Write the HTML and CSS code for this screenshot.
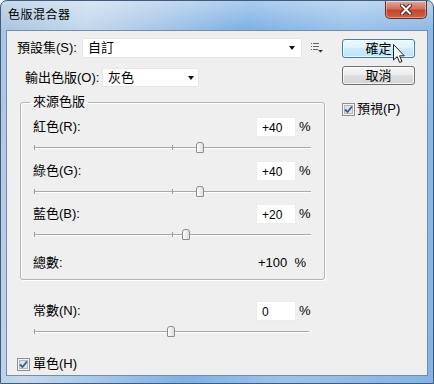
FILE: index.html
```html
<!DOCTYPE html>
<html lang="zh-Hant">

<head>
    <meta charset="UTF-8">
    <meta name="viewport" content="width=device-width, initial-scale=1.0">
    <title>色版混合器</title>
    <link rel="stylesheet" href="styles.css">
</head>

<body>
    <div class="window">
        <div class="titlebar">
            <span class="title">色版混合器</span>
            <div class="close-btn">
                <svg width="12" height="11" viewBox="0 0 12 11">
                    <path d="M2 1.5 L10 9.5 M10 1.5 L2 9.5" stroke="#4a2420" stroke-width="4" stroke-linecap="square"/>
                    <path d="M2 1.5 L10 9.5 M10 1.5 L2 9.5" stroke="#fff" stroke-width="2" stroke-linecap="square"/>
                </svg>
            </div>
        </div>

        <div class="client">
            <div class="main">
                <div class="preset-row">
                    <span class="preset-label">預設集(S):</span>
                    <div class="select preset-select"><span>自訂</span><span class="arrow"></span></div>
                    <!-- preset menu icon -->
                    <svg class="list-icon" width="12" height="10" viewBox="0 0 12 10">
                        <rect x="0" y="0" width="1" height="1" fill="#666"/>
                        <rect x="2" y="0" width="6" height="1" fill="#666"/>
                        <rect x="0" y="3" width="1" height="1" fill="#666"/>
                        <rect x="2" y="3" width="6" height="1" fill="#666"/>
                        <rect x="0" y="6" width="1" height="1" fill="#666"/>
                        <rect x="2" y="6" width="5" height="1" fill="#666"/>
                        <path d="M7 7 L12 7 L9.5 9.5 Z" fill="#333"/>
                    </svg>
                </div>

                <div class="output-row">
                    <span class="output-label">輸出色版(O):</span>
                    <div class="select output-select"><span>灰色</span><span class="arrow"></span></div>
                </div>

                <fieldset class="group">
                    <legend>來源色版</legend>

                    <div class="channel">
                        <div class="value-row">
                            <span class="label">紅色(R):</span>
                            <span class="num">+40</span>
                            <span class="pct">%</span>
                        </div>
                        <div class="slider">
                            <span class="tick start"></span>
                            <span class="tick mid"></span>
                            <span class="thumb" style="left: 60%"></span>
                        </div>
                    </div>

                    <div class="channel">
                        <div class="value-row">
                            <span class="label">綠色(G):</span>
                            <span class="num">+40</span>
                            <span class="pct">%</span>
                        </div>
                        <div class="slider">
                            <span class="tick start"></span>
                            <span class="tick mid"></span>
                            <span class="thumb" style="left: 60%"></span>
                        </div>
                    </div>

                    <div class="channel">
                        <div class="value-row">
                            <span class="label">藍色(B):</span>
                            <span class="num">+20</span>
                            <span class="pct">%</span>
                        </div>
                        <div class="slider">
                            <span class="tick start"></span>
                            <span class="tick mid"></span>
                            <span class="thumb" style="left: 55%"></span>
                        </div>
                    </div>

                    <div class="total-row">
                        <span class="label">總數:</span>
                        <span class="total">+100&nbsp;&nbsp;%</span>
                    </div>
                </fieldset>

                <div class="channel constant">
                    <div class="value-row">
                        <span class="label">常數(N):</span>
                        <span class="num">0</span>
                        <span class="pct">%</span>
                    </div>
                    <div class="slider">
                        <span class="tick start"></span>
                        <span class="thumb" style="left: 50%"></span>
                    </div>
                </div>

                <label class="check mono">
                    <svg class="box" width="13" height="13" viewBox="0 0 13 13">
                        <rect x="0.5" y="0.5" width="12" height="12" fill="#f4f4f4" stroke="#8f8f8f"/>
                        <rect x="2.5" y="2.5" width="8" height="8" fill="#dfe4ea" stroke="#b4b9c0"/>
                        <path d="M3 6.5 L5.5 9 L10 3.5" fill="none" stroke="#3d5a96" stroke-width="1.8"/>
                    </svg>
                    <span>單色(H)</span>
                </label>
            </div>

            <div class="side">
                <button class="btn default">確定</button>
                <button class="btn">取消</button>
                <label class="check">
                    <svg class="box" width="13" height="13" viewBox="0 0 13 13">
                        <rect x="0.5" y="0.5" width="12" height="12" fill="#f4f4f4" stroke="#8f8f8f"/>
                        <rect x="2.5" y="2.5" width="8" height="8" fill="#dfe4ea" stroke="#b4b9c0"/>
                        <path d="M3 6.5 L5.5 9 L10 3.5" fill="none" stroke="#3d5a96" stroke-width="1.8"/>
                    </svg>
                    <span>預視(P)</span>
                </label>
            </div>

            <!-- mouse pointer over the OK button -->
            <svg class="cursor" width="12" height="20" viewBox="0 0 12 20">
                <path d="M0.5 0.5 L0.5 16 L4.2 12.6 L6.6 18.5 L9 17.5 L6.6 11.8 L11.3 11.8 Z" fill="#fff" stroke="#222" stroke-width="1"/>
            </svg>
        </div>
    </div>
</body>

</html>
```

FILE: styles.css
```css
* {
    box-sizing: border-box;
}

html, body {
    margin: 0;
    padding: 0;
    background-color: #fff;
}

body {
    font-family: "Liberation Sans", "Noto Sans CJK TC", sans-serif;
    font-size: 13px;
    color: #000;
}

.window {
    width: 434px;
    height: 384px;
    display: flex;
    flex-direction: column;
    padding: 0 6px 8px;
    border: 1px solid #3d5c80;
    border-radius: 7px 7px 0 0;
    background:
        linear-gradient(to bottom, rgba(255, 255, 255, 0.35), rgba(255, 255, 255, 0) 28px),
        linear-gradient(100deg, #a9c3df 0%, #c4d8ec 18%, #a9c7e8 32%, #7fb1e4 50%, #9cc2ea 70%, #86b3e3 100%);
}

.titlebar {
    height: 30px;
    display: flex;
    justify-content: space-between;
    align-items: flex-start;
}

.title {
    margin: 6px 0 0 1px;
    font-size: 12px;
    line-height: 16px;
    letter-spacing: 0.5px;
}

.close-btn {
    width: 42px;
    height: 18px;
    display: flex;
    align-items: center;
    justify-content: center;
    border: 1px solid #6b2d22;
    border-top: none;
    border-radius: 0 0 5px 5px;
    background: linear-gradient(to bottom, #eab0a2 0%, #d9796300 0%, #e09a8a 10%, #d46f5a 45%, #c2442c 55%, #cd6446 100%);
    box-shadow: inset 0 0 0 1px rgba(255, 255, 255, 0.35);
}

.client {
    position: relative;
    height: 344px;
    display: flex;
    background-color: #efefef;
    box-shadow: 0 0 0 1px #6f8db0;
}

.main {
    width: 328px;
    padding-top: 7px;
}

.preset-row, .output-row {
    display: flex;
    align-items: center;
    line-height: 16px;
}

.preset-row {
    height: 20px;
}

.preset-label {
    width: 65px;
    margin-left: 10px;
}

.select {
    display: flex;
    align-items: center;
    justify-content: space-between;
    height: 100%;
    background-color: #fff;
    border: 1px solid #e6e6e6;
}

.preset-select {
    width: 220px;
    padding: 0 6px 0 5px;
}

.output-row {
    height: 19px;
    margin-top: 10px;
}

.output-label {
    width: 77px;
    margin-left: 18px;
}

.output-select {
    width: 97px;
    padding: 0 4px 0 5px;
}

.arrow {
    width: 0;
    height: 0;
    border-left: 3.5px solid transparent;
    border-right: 3.5px solid transparent;
    border-top: 4px solid #111;
}

.list-icon {
    margin-left: 9px;
}

/* source channels group */
.group {
    width: 303px;
    margin: 7px 0 0 13px;
    padding: 7px 13px 0 12px;
    border: 1px solid #b4b4b4;
    border-radius: 3px;
    box-shadow: inset 1px 1px 0 #fff, 1px 1px 0 #fff;
}

.group legend {
    margin-left: -3px;
    padding: 0 3px;
    line-height: 16px;
}

.channel {
    height: 43px;
}

.channel + .channel {
    margin-top: 0.5px;
}

.value-row {
    display: grid;
    grid-template-columns: 223px 40px auto;
    align-items: center;
    height: 20px;
    line-height: 16px;
}

.num {
    height: 20px;
    padding-left: 5px;
    font-size: 12px;
    line-height: 20px;
    background-color: #fff;
    border: 1px solid #ececec;
}

.pct {
    padding-left: 3px;
    white-space: nowrap;
}

.slider {
    position: relative;
    height: 23px;
}

.slider::before {
    content: "";
    position: absolute;
    left: 1px;
    right: 0;
    top: 10px;
    height: 1px;
    background-color: #a8a8a8;
    border-bottom: 1px solid #fff;
    box-sizing: content-box;
}

.tick {
    position: absolute;
    top: 8px;
    width: 1px;
    height: 5px;
    background-color: #9a9a9a;
}

.tick.start {
    left: 1px;
}

.tick.mid {
    left: 50%;
}

.thumb {
    position: absolute;
    top: 5px;
    width: 8px;
    height: 11px;
    margin-left: -4px;
    border: 1px solid #8c8c8c;
    border-radius: 3px 3px 1px 1px;
    background: linear-gradient(to right, #fdfdfd, #dedede);
}

.total-row {
    display: grid;
    grid-template-columns: 225px auto;
    align-items: center;
    height: 32px;
    line-height: 16px;
}

.constant {
    width: 276px;
    margin: 21px 0 0 26px;
}

.check {
    display: flex;
    align-items: center;
    gap: 3px;
    line-height: 16px;
}

.mono {
    margin: 12px 0 0 10px;
}

/* buttons column */
.side {
    display: flex;
    flex-direction: column;
    align-items: flex-start;
    margin-left: 7px;
    padding-top: 8px;
}

.btn {
    width: 73px;
    height: 19px;
    padding: 0;
    font-family: inherit;
    font-size: 13px;
    line-height: 16px;
    color: #000;
    border: 1px solid #707070;
    border-radius: 3px;
    background: linear-gradient(to bottom, #f6f6f6 0%, #ececec 45%, #dfdfdf 50%, #d3d3d3 100%);
    box-shadow: inset 0 0 0 1px rgba(255, 255, 255, 0.7);
}

.btn + .btn {
    margin-top: 8px;
}

.btn.default {
    border-color: #3c7fb1;
    background: linear-gradient(to bottom, #eef8fe 0%, #dff2fc 45%, #cdeafa 50%, #bfe3f7 100%);
}

.side .check {
    margin-top: 16px;
    gap: 2px;
}

.cursor {
    position: absolute;
    left: 386px;
    top: 13px;
}
```
